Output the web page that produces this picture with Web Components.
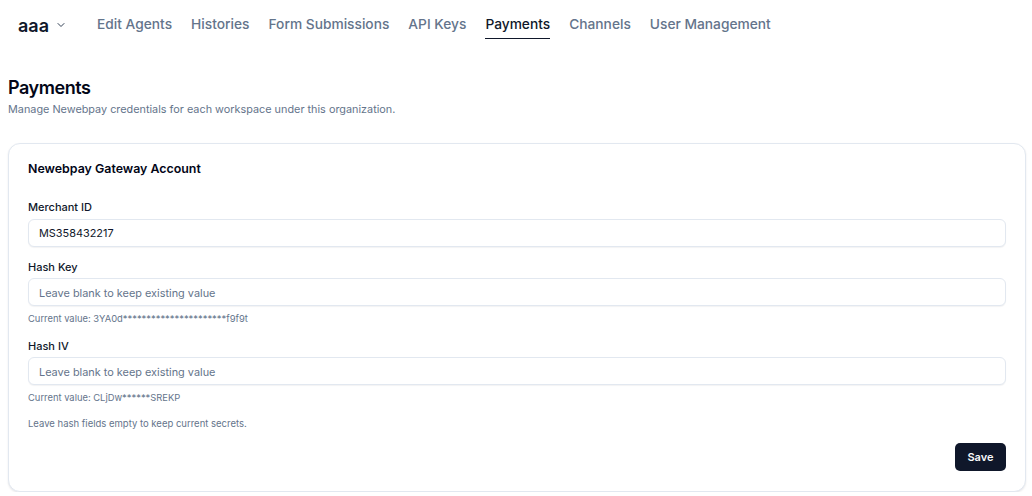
<!DOCTYPE html>
<html lang="en">
<head>
<meta charset="utf-8">
<title>Payments</title>
<style>
  html, body { margin: 0; background: #fff; }
  body { font-family: Inter, "Liberation Sans", sans-serif; color: #0f172a; }
</style>
</head>
<body>
<app-page>
  <top-nav slot="nav" org="aaa">
    <nav-link>Edit Agents</nav-link>
    <nav-link>Histories</nav-link>
    <nav-link>Form Submissions</nav-link>
    <nav-link>API Keys</nav-link>
    <nav-link active>Payments</nav-link>
    <nav-link>Channels</nav-link>
    <nav-link>User Management</nav-link>
  </top-nav>
  <page-header heading="Payments">Manage Newebpay credentials for each workspace under this organization.</page-header>
  <form-card heading="Newebpay Gateway Account">
    <form-field label="Merchant ID" value="MS358432217"></form-field>
    <form-field label="Hash Key" placeholder="Leave blank to keep existing value">Current value: 3YA0d**********************f9f9t</form-field>
    <form-field label="Hash IV" placeholder="Leave blank to keep existing value">Current value: CLjDw******SREKP</form-field>
    <span slot="note">Leave hash fields empty to keep current secrets.</span>
    <save-button slot="actions">Save</save-button>
  </form-card>
</app-page>

<script>
class AppPage extends HTMLElement {
    connectedCallback() {
        this.attachShadow({ mode: 'open' });
        this.shadowRoot.innerHTML = `
            <style>
                :host { display: block; }
                main { padding: 0 6px 0 8px; }
            </style>
            <slot name="nav"></slot>
            <main><slot></slot></main>
        `;
    }
}

class TopNav extends HTMLElement {
    connectedCallback() {
        this.attachShadow({ mode: 'open' });
        this.shadowRoot.innerHTML = `
            <style>
                :host { display: flex; align-items: flex-start; height: 39px; padding: 10px 0 0 18px; box-sizing: content-box; }
                .org { display: flex; align-items: center; height: 28px; padding-top: 3px; width: 79px; box-sizing: border-box; gap: 6px; font-size: 18px; font-weight: 600; color: #0f172a; }
                .org svg { width: 12px; height: 12px; margin-top: -2px; }
                .links { display: flex; gap: 19px; }
            </style>
            <div class="org">
                <span>${this.getAttribute('org')}</span>
                <svg viewBox="0 0 24 24" fill="none" stroke="#334155" stroke-width="2" stroke-linecap="round" stroke-linejoin="round"><path d="M6 9l6 6 6-6"/></svg>
            </div>
            <div class="links"><slot></slot></div>
        `;
    }
}

class NavLink extends HTMLElement {
    connectedCallback() {
        this.attachShadow({ mode: 'open' });
        this.shadowRoot.innerHTML = `
            <style>
                :host { display: block; height: 29px; box-sizing: border-box; line-height: 28px; font-size: 13.75px; font-weight: 500; color: #64748b; white-space: nowrap; }
                :host([active]) { color: #0f172a; border-bottom: 1px solid #0f172a; }
            </style>
            <slot></slot>
        `;
    }
}

class PageHeader extends HTMLElement {
    connectedCallback() {
        this.attachShadow({ mode: 'open' });
        this.shadowRoot.innerHTML = `
            <style>
                :host { display: block; padding-top: 26px; margin-bottom: 26px; }
                h1 { margin: 0; font-size: 18px; line-height: 26px; font-weight: 600; letter-spacing: -0.45px; color: #020617; }
                p { margin: 0; font-size: 10.85px; line-height: 16px; color: #64748b; }
            </style>
            <h1>${this.getAttribute('heading')}</h1>
            <p><slot></slot></p>
        `;
    }
}

class FormCard extends HTMLElement {
    connectedCallback() {
        this.attachShadow({ mode: 'open' });
        this.shadowRoot.innerHTML = `
            <style>
                :host { display: block; box-sizing: border-box; height: 349px; padding: 16px 19px; border: 1px solid #e2e8f0; border-radius: 12px; background: #fff; box-shadow: 0 1px 2px rgba(15,23,42,.1); }
                h2 { margin: 0 0 21px; font-size: 12.4px; line-height: 18px; font-weight: 600; color: #020617; }
                .note { font-size: 9.5px; line-height: 13px; color: #64748b; }
                .actions { display: flex; justify-content: flex-end; margin-top: 13.6px; }
            </style>
            <h2>${this.getAttribute('heading')}</h2>
            <slot></slot>
            <div class="note"><slot name="note"></slot></div>
            <div class="actions"><slot name="actions"></slot></div>
        `;
    }
}

class FormField extends HTMLElement {
    connectedCallback() {
        const value = this.getAttribute('value') || '';
        const placeholder = this.getAttribute('placeholder') || '';
        this.attachShadow({ mode: 'open' });
        this.shadowRoot.innerHTML = `
            <style>
                :host { display: block; margin-bottom: 12px; }
                label { display: block; font-size: 11px; line-height: 17px; font-weight: 500; color: #0f172a; margin-bottom: 2.6px; }
                input { display: block; width: 100%; height: 28px; box-sizing: border-box; padding: 1px 10px 0; border: 1px solid #e2e8f0; border-radius: 6px; background: #fff; font: 400 10.9px Inter, "Liberation Sans", sans-serif; color: #0f172a; box-shadow: 0 1px 1px rgba(15,23,42,.05); outline: none; }
                input::placeholder { color: #64748b; opacity: 1; }
                .hint { margin-top: 5.4px; font-size: 9.4px; line-height: 14px; color: #64748b; }
                .hint:empty { display: none; }
            </style>
            <label>${this.getAttribute('label')}</label>
            <input value="${value}" placeholder="${placeholder}">
            <div class="hint">${this.innerHTML}</div>
        `;
    }
}

class SaveButton extends HTMLElement {
    connectedCallback() {
        this.attachShadow({ mode: 'open' });
        this.shadowRoot.innerHTML = `
            <style>
                :host { display: inline-flex; align-items: center; justify-content: center; width: 51px; height: 28px; border-radius: 5px; background: #0f172a; color: #f8fafc; font-size: 11px; font-weight: 600; cursor: pointer; }
            </style>
            <slot></slot>
        `;
    }
}

customElements.define('app-page', AppPage);
customElements.define('top-nav', TopNav);
customElements.define('nav-link', NavLink);
customElements.define('page-header', PageHeader);
customElements.define('form-card', FormCard);
customElements.define('form-field', FormField);
customElements.define('save-button', SaveButton);
</script>
</body>
</html>
